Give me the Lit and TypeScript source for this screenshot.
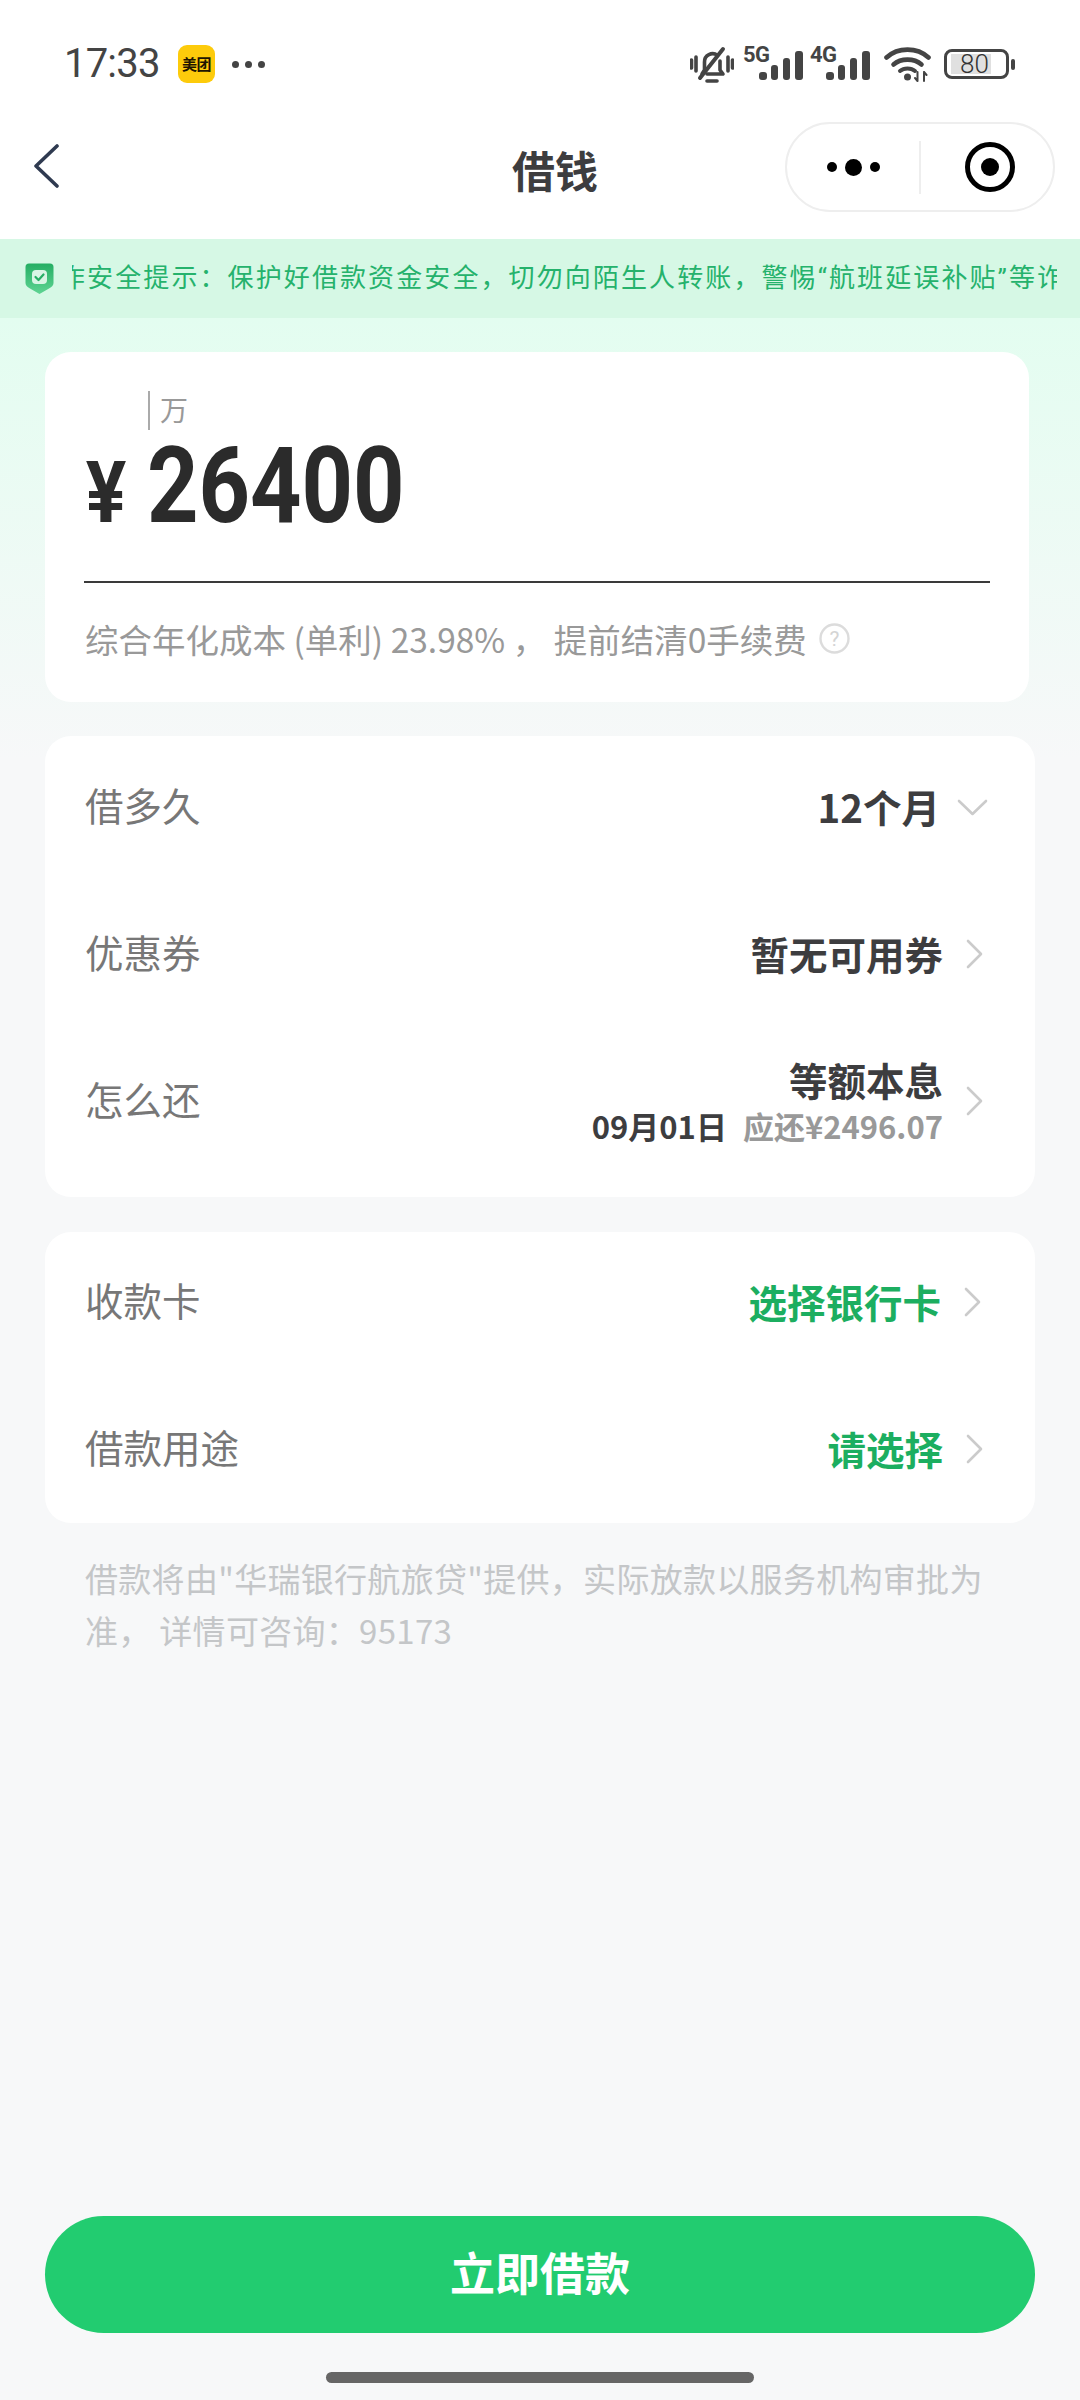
import { LitElement, html, css, svg } from "lit";
import { customElement } from "lit/decorators.js";

const chevron = html`<svg class="chev" width="17" height="30" viewBox="0 0 17 30"><path d="M2 2 L15 15 L2 28" fill="none" stroke="#cbcbcb" stroke-width="2.6" stroke-linecap="round" stroke-linejoin="round"/></svg>`;

@customElement("app-root")
export class AppRoot extends LitElement {
  static styles = css`
    :host { display: flex; flex-direction: column; width: 1080px; height: 2400px; background: #fff; font-family: "Noto Sans CJK SC", "Noto Sans", sans-serif; color: #3d3d3f; overflow: hidden; }
    .status { height: 122px; box-sizing: border-box; padding: 6px 0 0 64px; display: flex; align-items: center; flex: none; }
    .time { font: 400 40px/1 Roboto, sans-serif; letter-spacing: -0.8px; color: #444; width: 114px; }
    .mt { width: 37px; height: 38px; border-radius: 9px; background: #fdcb0b; color: #201400; font-size: 15px; font-weight: 700; line-height: 38px; text-align: center; letter-spacing: -0.5px; }
    .dots3 { display: flex; gap: 6px; margin-left: 17px; }
    .dots3 i { width: 7px; height: 7px; border-radius: 50%; background: #444; }
    .sys { margin-left: auto; margin-right: 65px; display: flex; align-items: center; }
    .bell { margin-right: 9px; }
    .net { position: relative; width: 61px; height: 37px; margin-right: 6px; }
    .net b { position: absolute; left: 0; top: -1px; font: 700 22px/20px Roboto, sans-serif; letter-spacing: -.5px; color: #444; }
    .net svg { position: absolute; right: 0; bottom: 3px; }
    .wifi { margin: 0 13px 0 7px; }
    .batt { position: relative; display: flex; align-items: center; width: 65px; height: 30px; box-sizing: border-box; border: 3px solid #444; border-radius: 8px; margin-right: 2px; padding-left: 4px; }
    .batt span { display: block; width: 40px; height: 20px; background: #e0e0e0; font: 300 26px/20px Roboto, sans-serif; color: #333; white-space: nowrap; padding-left: 9px; box-sizing: border-box; }
    .nub { width: 4px; height: 11px; border-radius: 2px; background: #444; }

    .nav { display: grid; grid-template-columns: 325px 460px 270px; height: 117px; flex: none; align-items: start; }
    .back { padding: 22px 0 0 34px; }
    .title { text-align: center; font-size: 43px; font-weight: 700; line-height: 89px; padding-top: 3px; }
    .pill { height: 90px; box-sizing: border-box; border: 2px solid #eeeeee; border-radius: 45px; display: flex; align-items: center; background: #fff; }
    .more { width: 132px; display: flex; justify-content: center; align-items: center; gap: 8px; }
    .more i { width: 10px; height: 10px; border-radius: 50%; background: #000; }
    .more i.big { width: 17px; height: 17px; }
    .sep { width: 2px; height: 53px; background: #eeeeee; }
    .target { flex: 1; display: flex; justify-content: center; padding-left: 6px; }

    .banner { height: 79px; flex: none; background: #d6f8e5; display: flex; align-items: center; padding-left: 25px; box-sizing: border-box; }
    .shield { flex: none; margin-right: 18px; }
    .clip { width: 985px; overflow: hidden; white-space: nowrap; color: #25b26c; font-family: Roboto, "Noto Sans CJK SC", sans-serif; font-size: 26px; letter-spacing: 2.1px; line-height: 79px; }
    .clip span { display: inline-block; margin-left: -13px; }

    .main { flex: 1; display: flex; flex-direction: column; padding: 34px 45px 17px; background: linear-gradient(#e3fdf0, #f7f8f9 440px); }
    .card { background: #fff; border-radius: 26px; }
    .amount { width: 984px; height: 350px; box-sizing: border-box; padding: 39px 39px 0; flex: none; }
    .unit { display: flex; height: 39px; margin-left: 64px; }
    .cursor { width: 2px; background: #aaa; }
    .unit span { margin-left: 10px; font-size: 28px; line-height: 36px; color: #999; }
    .figure { display: flex; align-items: baseline; height: 153px; box-sizing: border-box; border-bottom: 2px solid #3a3a3a; color: #2b2b2b; }
    .figure .cur { font: 700 86px/114px Roboto, sans-serif; width: 63px; padding-left: 2px; box-sizing: border-box; transform: scaleX(.88); transform-origin: left; }
    .figure .num { font: 700 105px/114px Roboto, sans-serif; transform: scaleX(.855); transform-origin: left; }
    .rate { display: flex; align-items: center; height: 110px; padding-left: 1px; font-size: 33.500px; color: #999; white-space: nowrap; }
    .rate svg { margin-left: 12px; }

    .group { display: flex; flex-direction: column; gap: 7px; margin-top: 34px; flex: none; }
    .g2 { padding: 1px 0 26px; }
    .g3 { margin-top: 35px; padding-bottom: 4px; }
    .row { height: 140px; display: flex; align-items: center; padding: 0 52px 0 40px; font-size: 38.500px; color: #777; }
    .row > span { margin-bottom: 6px; }
    .row.down { padding-right: 47px; }
    .row.down .chev { margin-left: 17px; }
    .row.nudge { padding-right: 54px; }
    .val { margin-left: auto; margin-bottom: 2px; text-align: right; font-weight: 700; color: #3d3d3f; }
    .val.green { color: #1cae60; }
    .chev { flex: none; margin-left: 23px; }
    .val .sub { display: flex; justify-content: flex-end; gap: 16px; font-size: 31px; line-height: 42px; white-space: nowrap; }
    .val .main-line { line-height: 52px; }
    .sub em { font-style: normal; color: #999; }
    .note { margin: 29px 0 0 40px; width: 935px; font-size: 33px; line-height: 52px; color: #c4c6c8; flex: none; letter-spacing: .3px; }
    .cta { margin-top: auto; height: 117px; box-sizing: border-box; padding-bottom: 5px; flex: none; border-radius: 59px; background: #22cc70; color: #fff; font-size: 45px; font-weight: 700; line-height: 112px; text-align: center; }
    .home { margin: 39px auto 0; width: 428px; height: 11px; border-radius: 6px; background: #666; flex: none; }
  `;

  render() {
    return html`
      <div class="status">
        <div class="time">17:33</div>
        <div class="mt">美团</div>
        <div class="dots3"><i></i><i></i><i></i></div>
        <div class="sys">
          <svg class="bell" width="44" height="37" viewBox="0 0 44 37" fill="none" stroke="#444" stroke-width="3.600" stroke-linecap="round" stroke-linejoin="round">
            <path d="M1.500 14v8M6 11v14M38 11v14M42.500 14v8"/>
            <path d="M12 28l2.500-4v-8a8 8 0 0 1 13-6.500M30 15v9l3 4H17"/>
            <path d="M10 32L33 3" stroke-width="4"/>
            <path d="M17 35h10"/>
          </svg>
          <div class="net"><b>5G</b>${this.bars()}</div>
          <div class="net"><b>4G</b>${this.bars()}</div>
          <svg class="wifi" width="47" height="36" viewBox="0 0 47 36" fill="none" stroke="#444" stroke-linecap="round">
            <path d="M2.500 11.500C14 1 33 1 44.500 11.500" stroke-width="4.600"/>
            <path d="M9.500 18.500C17 12 30 12 37.500 18.500" stroke-width="4.600"/>
            <path d="M16 25c4-3.500 11-3.500 15 0" stroke-width="4"/>
            <circle cx="23.500" cy="31" r="3.500" fill="#444" stroke="none"/>
            <path d="M33.500 26v9M40 26v9M31 32l2.500 3M40 26l2.500 3" stroke-width="2"/>
          </svg>
          <div class="batt"><span>80</span></div>
          <div class="nub"></div>
        </div>
      </div>

      <div class="nav">
        <div class="back"><svg width="25" height="44" viewBox="0 0 25 44"><path d="M23 2 L2 22 L23 42" fill="none" stroke="#2f3a50" stroke-width="3.600" stroke-linecap="round" stroke-linejoin="round"/></svg></div>
        <div class="title">借钱</div>
        <div class="pill">
          <div class="more"><i></i><i class="big"></i><i></i></div>
          <div class="sep"></div>
          <div class="target"><svg width="50" height="50" viewBox="0 0 50 50"><circle cx="25" cy="25" r="22.500" fill="none" stroke="#000" stroke-width="5"/><circle cx="25" cy="25" r="9" fill="#000"/></svg></div>
        </div>
      </div>

      <div class="banner">
        <svg class="shield" width="29" height="31" viewBox="0 0 29 31">
          <defs><linearGradient id="sg" x1="0" y1="0" x2="0" y2="1"><stop offset="0" stop-color="#25ae63"/><stop offset="1" stop-color="#5fd493"/></linearGradient></defs>
          <path d="M4 0.500H25Q28.500 0.500 28.500 4V20Q28.500 23 24 25.500L14.500 31L5 25.500Q0.500 23 0.500 20V4Q0.500 0.500 4 0.500Z" fill="url(#sg)"/>
          <rect x="7" y="7" width="15" height="14" rx="4" fill="#d9f5e5"/>
          <path d="M10.500 14l3 3 5-5.500" fill="none" stroke="#27ae65" stroke-width="2.200" stroke-linecap="round" stroke-linejoin="round"/>
        </svg>
        <div class="clip"><span>诈安全提示：保护好借款资金安全，切勿向陌生人转账，警惕“航班延误补贴”等诈骗</span></div>
      </div>

      <div class="main">
        <div class="card amount">
          <div class="unit"><div class="cursor"></div><span>万</span></div>
          <div class="figure"><span class="cur">¥</span><span class="num">26400</span></div>
          <div class="rate">综合年化成本 (单利) 23.98% ， 提前结清0手续费
            <svg width="31" height="31" viewBox="0 0 31 31"><circle cx="15.500" cy="15.500" r="14" fill="none" stroke="#dcdcdc" stroke-width="2.400"/><text x="15.500" y="23" text-anchor="middle" font-size="21" font-family="Roboto, sans-serif" fill="#d4d4d4">?</text></svg>
          </div>
        </div>

        <div class="card group g2">
          <div class="row down"><span>借多久</span><div class="val">12个月</div>
            <svg class="chev" width="31" height="17" viewBox="0 0 31 17"><path d="M2 2 L15.500 15 L29 2" fill="none" stroke="#cbcbcb" stroke-width="2.600" stroke-linecap="round" stroke-linejoin="round"/></svg>
          </div>
          <div class="row"><span>优惠券</span><div class="val">暂无可用券</div>${chevron}</div>
          <div class="row"><span>怎么还</span>
            <div class="val"><div class="main-line">等额本息</div><div class="sub"><span>09月01日</span><em>应还¥2496.07</em></div></div>${chevron}
          </div>
        </div>

        <div class="card group g3">
          <div class="row nudge"><span>收款卡</span><div class="val green">选择银行卡</div>${chevron}</div>
          <div class="row"><span>借款用途</span><div class="val green">请选择</div>${chevron}</div>
        </div>

        <div class="note">借款将由"华瑞银行航旅贷"提供，实际放款以服务机构审批为准， 详情可咨询：95173</div>

        <div class="cta">立即借款</div>
        <div class="home"></div>
      </div>
    `;
  }

  bars() {
    return html`<svg width="45" height="29" viewBox="0 0 45 29" fill="#444">
      ${svg`<rect x="0" y="21" width="8" height="8" rx="3"/>
      <rect x="12" y="14" width="7" height="15" rx="3"/>
      <rect x="24" y="7" width="7" height="22" rx="3"/>
      <rect x="36" y="0" width="8" height="29" rx="3"/>`}
    </svg>`;
  }
}
